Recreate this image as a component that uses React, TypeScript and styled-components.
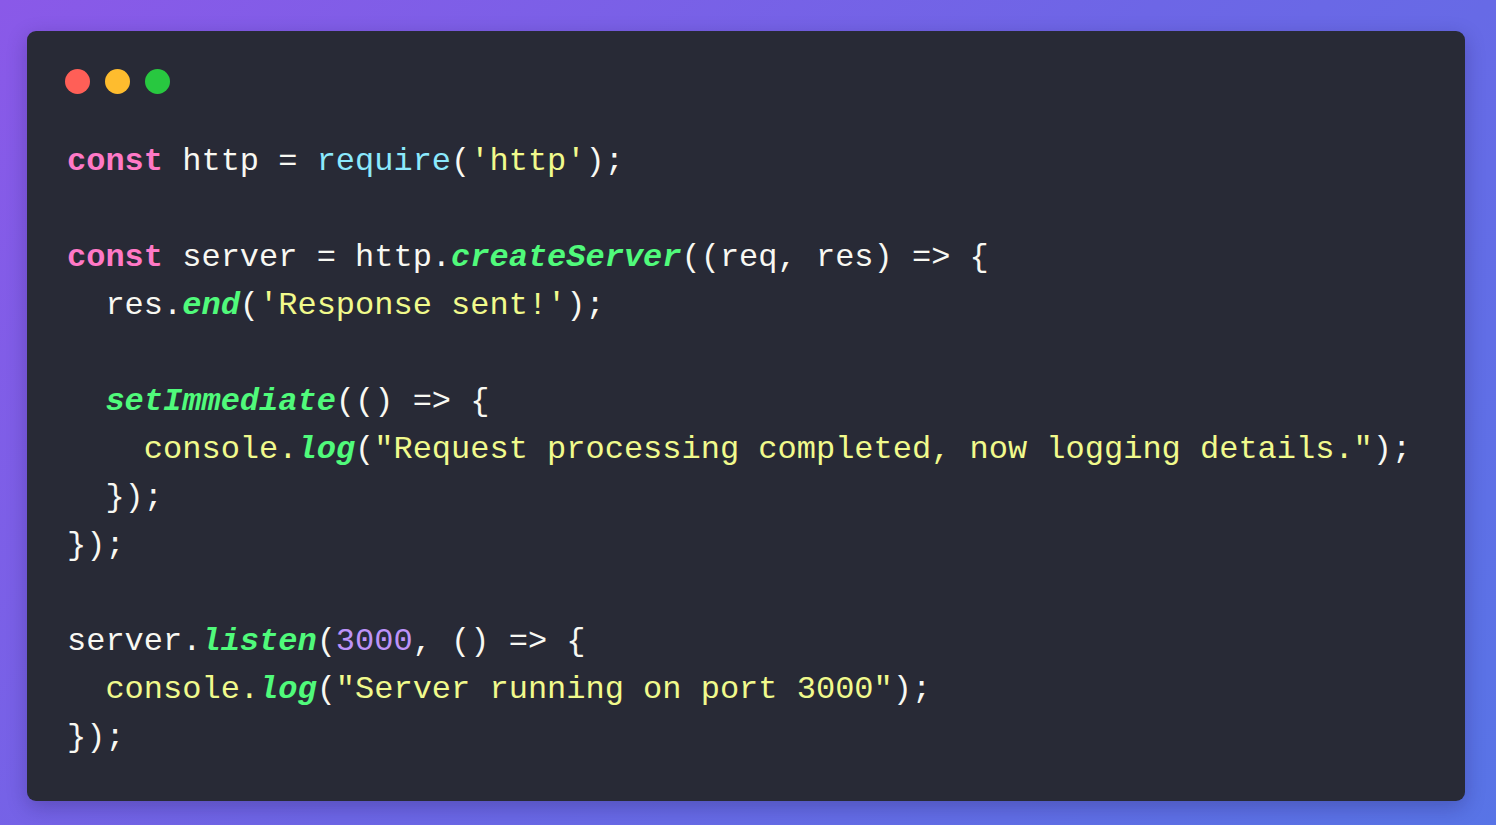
import React from "react";
import styled, { createGlobalStyle } from "styled-components";

const GlobalStyle = createGlobalStyle`
  html, body { margin: 0; padding: 0; }
  body { font-family: "Liberation Sans", sans-serif; }
`;

const Page = styled.div`
  min-height: 100vh;
  box-sizing: border-box;
  padding: 31px 31px 25px 27px;
  background: linear-gradient(135deg, #8a59e8 0%, #6d66e6 50%, #5874e6 100%);
`;

const Window = styled.div`
  background: #282a36;
  border-radius: 9px;
  padding: 38px 40px 39px 40px;
  box-shadow: 0 6px 20px rgba(20, 10, 60, 0.25);
`;

const Dots = styled.div`
  display: flex;
  gap: 15px;
  margin-left: -2px;
  margin-bottom: 44px;
`;

const Dot = styled.span<{ $color: string }>`
  width: 25px;
  height: 25px;
  border-radius: 50%;
  background: ${(p) => p.$color};
`;

const Code = styled.pre`
  margin: 0;
  font-family: "Liberation Mono", "Courier New", monospace;
  font-size: 32px;
  line-height: 48px;
  color: #f8f8f2;
  white-space: pre;
`;

const Line = styled.div`
  height: 48px;
`;

type Kind = "kw" | "fn" | "call" | "str" | "num" | "plain";

const colors: Record<Kind, string> = {
  kw: "#ff79c6",
  fn: "#50fa7b",
  call: "#8be9fd",
  str: "#f1fa8c",
  num: "#bd93f9",
  plain: "#f8f8f2",
};

const Tok = styled.span<{ $kind: Kind }>`
  color: ${(p) => colors[p.$kind]};
  font-weight: ${(p) => (p.$kind === "kw" || p.$kind === "fn" ? 700 : 400)};
  font-style: ${(p) => (p.$kind === "fn" ? "italic" : "normal")};
`;

type Seg = [Kind, string];

const lines: Seg[][] = [
  [["kw", "const"], ["plain", " http = "], ["call", "require"], ["plain", "("], ["str", "'http'"], ["plain", ");"]],
  [],
  [["kw", "const"], ["plain", " server = http."], ["fn", "createServer"], ["plain", "((req, res) => {"]],
  [["plain", "  res."], ["fn", "end"], ["plain", "("], ["str", "'Response sent!'"], ["plain", ");"]],
  [],
  [["plain", "  "], ["fn", "setImmediate"], ["plain", "(() => {"]],
  [["str", "    console."], ["fn", "log"], ["plain", "("], ["str", "\"Request processing completed, now logging details.\""], ["plain", ");"]],
  [["plain", "  });"]],
  [["plain", "});"]],
  [],
  [["plain", "server."], ["fn", "listen"], ["plain", "("], ["num", "3000"], ["plain", ", () => {"]],
  [["str", "  console."], ["fn", "log"], ["plain", "("], ["str", "\"Server running on port 3000\""], ["plain", ");"]],
  [["plain", "});"]],
];

export default function App() {
  return (
    <>
      <GlobalStyle />
      <Page>
        <Window>
          <Dots>
            <Dot $color="#ff5f57" />
            <Dot $color="#febc2e" />
            <Dot $color="#28c840" />
          </Dots>
          <Code>
            {lines.map((segs, i) => (
              <Line key={i}>
                {segs.map(([k, t], j) => (
                  <Tok key={j} $kind={k}>
                    {t}
                  </Tok>
                ))}
              </Line>
            ))}
          </Code>
        </Window>
      </Page>
    </>
  );
}
